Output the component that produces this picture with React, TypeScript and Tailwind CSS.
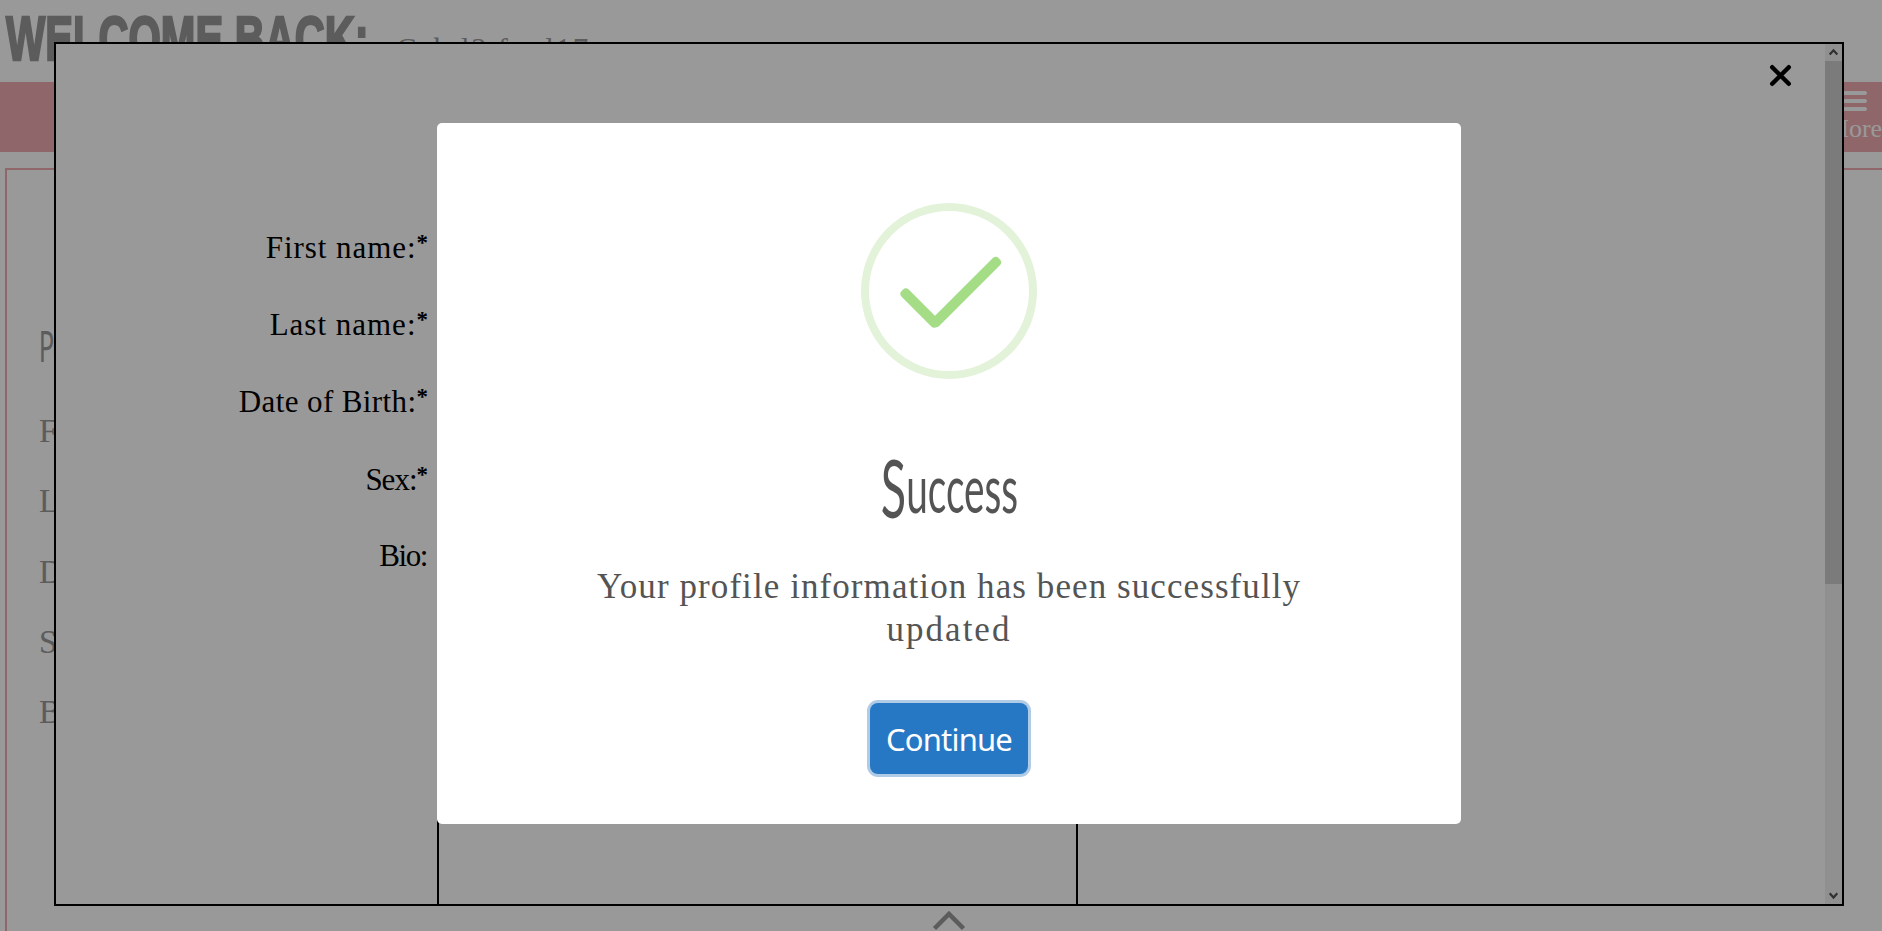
import React from "react";

const serif = "font-['Liberation_Serif',serif]";

const profileRows = ["First name:", "Last name:", "Date of Birth:", "Sex:", "Bio:"];

const formRows = [
  { label: "First name:", tracking: "tracking-[0.95px]" },
  { label: "Last name:", tracking: "tracking-[1px]" },
  { label: "Date of Birth:", tracking: "tracking-[0.4px]" },
  { label: "Sex:", tracking: "tracking-[-1px]" },
];

function Page() {
  return (
    <div className={`h-[931px] w-full overflow-hidden bg-white text-[#999] ${serif}`}>
      <header className="flex h-[82px] pl-[6px] pt-[6px]">
        <h1 className="w-[390px] shrink-0 whitespace-nowrap font-['Liberation_Sans',sans-serif] text-[63px] font-bold leading-[65px]">
          <span className="inline-block origin-left scale-x-[0.66] [-webkit-text-stroke:2.5px_#999]">WELCOME BACK:</span>
        </h1>
        <p className="whitespace-nowrap pt-[26px] text-[31px] leading-[36px] tracking-[1.6px]">Cabtl2 fattl17</p>
      </header>
      <nav className="flex h-[70px] justify-end bg-[#eeaab1] text-white">
        <div className="-mr-[2px] flex w-[60px] flex-col items-center pt-[9px]">
          <div className="flex w-[26px] flex-col gap-[4px]">
            <span className="h-[4px] rounded-full bg-white" />
            <span className="h-[4px] rounded-full bg-white" />
            <span className="h-[4px] rounded-full bg-white" />
          </div>
          <span className="mt-[4px] text-[26px] leading-[28px]">More</span>
        </div>
      </nav>
      <main className="ml-[5px] mt-[16px] h-[800px] border-2 border-r-0 border-[#eeaab1] pl-[32px] pt-[150px]">
        <h2 className="w-[200px] font-['Lato',sans-serif] text-[43px] leading-[51px]">
          <span className="inline-block origin-left scale-x-[0.57]">Personal</span>
        </h2>
        <ul className="mt-[42px]">
          {profileRows.map((row) => (
            <li key={row} className="h-[70.3px] text-[33px] leading-[36px]">
              {row}
            </li>
          ))}
        </ul>
      </main>
    </div>
  );
}

function ScrollBar() {
  return (
    <div className="flex w-[17px] shrink-0 flex-col bg-[#f1f1f1]">
      <svg className="h-[17px] w-[17px] shrink-0" viewBox="0 0 17 17" fill="none" stroke="#505050" strokeWidth="2.2">
        <path d="M4.7 10.5 8.5 6.3l3.8 4.2" />
      </svg>
      <div className="h-[523px] bg-[#cdcdcd]" />
      <svg className="mt-auto h-[17px] w-[17px] shrink-0" viewBox="0 0 17 17" fill="none" stroke="#505050" strokeWidth="2.2">
        <path d="M4.7 6.3 8.5 10.5l3.8-4.2" />
      </svg>
    </div>
  );
}

function EditDialog() {
  return (
    <section className="absolute left-[54px] top-[42px] flex h-[864px] w-[1790px] border-2 border-black bg-white text-black">
      <div className="flex flex-1 flex-col overflow-hidden">
        <div className="flex h-[44px] shrink-0 justify-end pr-[33px] pt-[20px]">
          <svg className="h-[23px] w-[23px]" viewBox="0 0 23 23" fill="none" stroke="#000" strokeWidth="4.4" strokeLinecap="round">
            <path d="M3.2 3.2 19.8 19.8M19.8 3.2 3.2 19.8" />
          </svg>
        </div>
        <form className={`flex flex-col pt-[142px] text-[31px] leading-[36px] ${serif}`}>
          {formRows.map((row) => (
            <div key={row.label} className="flex h-[77.2px] shrink-0">
              <label className={`flex w-[371px] justify-end ${row.tracking}`}>
                {row.label}
                <b className="-mt-[5px] text-[23px] tracking-[-1px]">*</b>
              </label>
            </div>
          ))}
          <div className="flex shrink-0 gap-[10px]">
            <label className="-mt-[1px] w-[371px] text-right tracking-[-1.4px]">Bio:</label>
            <div className="h-[500px] w-[641px] border-2 border-black" />
          </div>
        </form>
      </div>
      <ScrollBar />
    </section>
  );
}

function SuccessCard() {
  return (
    <div
      role="dialog"
      className="absolute left-[437px] top-[123px] flex h-[701px] w-[1024px] flex-col items-center rounded-[5px] bg-white pt-[80px] text-[#545454]"
    >
      <svg className="h-[176px] w-[176px] shrink-0" viewBox="0 0 176 176">
        <circle cx="88" cy="88" r="84" fill="none" stroke="#e3f3da" strokeWidth="8" />
        <g fill="#a5dc86">
          <rect x="34" y="100" width="50" height="10" rx="4" transform="rotate(45 59 105)" />
          <rect x="58" y="84" width="94" height="10" rx="4" transform="rotate(-45 105 89)" />
        </g>
      </svg>
      <h2 className="mt-[61px] h-[85px] font-['Lato',sans-serif] text-[68px] leading-[80px]">
        <span className="inline-block scale-x-[0.57]">
          <span className="relative top-[5px] text-[82px] leading-none">S</span>uccess
        </span>
      </h2>
      <p className={`mt-[40px] w-[760px] text-center text-[35px] leading-[43px] tracking-[1.08px] ${serif}`}>
        Your profile information has been successfully
        <br />
        <span className="tracking-[2px]">updated</span>
      </p>
      <button className="mt-[52px] h-[71px] w-[158px] rounded-[8px] bg-[#2778c4] pt-[2px] font-['Noto_Sans',sans-serif] text-[31px] leading-none tracking-[-0.8px] text-white shadow-[0_0_0_3px_#b0cbe6]">
        Continue
      </button>
    </div>
  );
}

export default function App() {
  return (
    <div className="relative h-[931px] w-full overflow-hidden">
      <Page />
      <svg className="absolute left-[931px] top-[909px] h-[22px] w-[36px]" viewBox="0 0 36 22" fill="none" stroke="#999" strokeWidth="4.5">
        <path d="M3.5 19.5 18 5l14.500 14.500" />
      </svg>
      <EditDialog />
      <div className="absolute inset-0 bg-black/40" />
      <SuccessCard />
    </div>
  );
}
